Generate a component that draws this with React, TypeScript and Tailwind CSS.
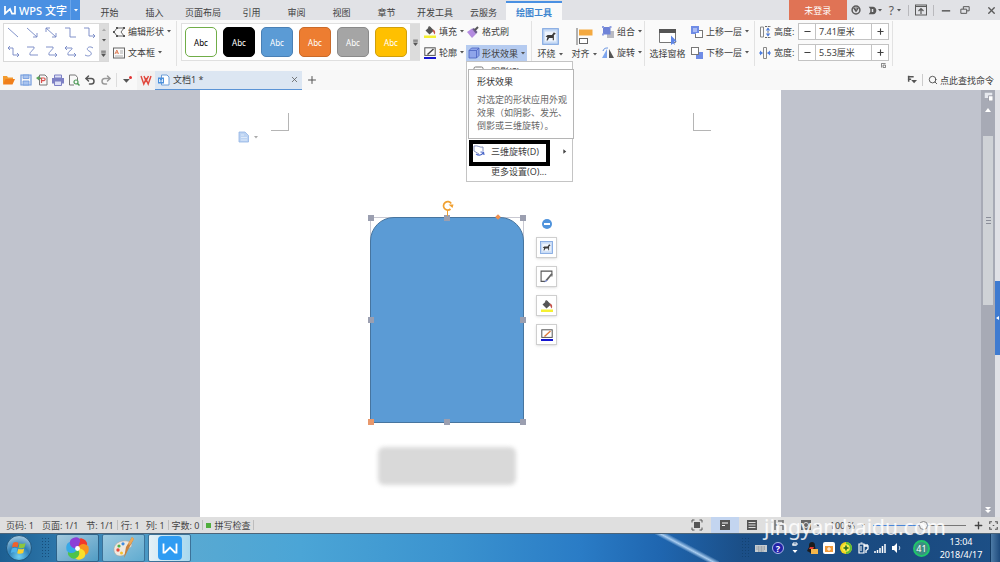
import { useState, type ReactNode } from "react";
import { Minus, Plus, Redo2, Search, Undo2, X } from "lucide-react";

const TABS = ["开始", "插入", "页面布局", "引用", "审阅", "视图", "章节", "开发工具", "云服务"];

const LINES = [
    "M1 1 L11 10",
    "M1 1 L11 10 M11 6 V10 H7",
    "M1 1 L11 10 M11 6 V10 H7 M1 5 V1 H5",
    "M1 1 H6 V10 H12",
    "M1 1 H6 V9 H12 M10 7 L12 9 L10 11",
    "M3 0 L1 2 L3 4 M1 2 H6 V9 H12 M10 7 L12 9 L10 11",
    "M1 1 H8 C9 4 3 5 4 9 H12",
    "M1 1 H8 C9 4 3 5 4 9 H12 M10 7 L12 9 L10 11",
    "M3 0 L1 2 L3 4 M1 2 H8 C9 4 3 5 4 9 H12 M10 7 L12 9 L10 11",
    "M10 2 C6 -1 2 3 6 5 C11 7 7 12 2 9",
];

const STYLES = [
    "border-[#70ad47] bg-white text-black",
    "border-black bg-black text-white",
    "border-[#4a80b5] bg-[#5b9bd5] text-white",
    "border-[#c96a2a] bg-[#ed7d31] text-white",
    "border-[#8a8a8a] bg-[#a5a5a5] text-white",
    "border-[#cf9f0c] bg-[#ffc000] text-white",
];

const HANDLES = [
    "left-[-3px] top-[-3px] bg-[#9b9fb0]",
    "left-[73px] top-[-3px] bg-[#9b9fb0]",
    "right-[-3px] top-[-3px] bg-[#9b9fb0]",
    "left-[-3px] top-[99px] bg-[#9b9fb0]",
    "right-[-3px] top-[99px] bg-[#9b9fb0]",
    "left-[-3px] bottom-[-3px] bg-[#e8986c]",
    "left-[73px] bottom-[-3px] bg-[#9b9fb0]",
    "right-[-3px] bottom-[-3px] bg-[#9b9fb0]",
];

function Icon({ children, className = "size-3" }: { children: ReactNode; className?: string }) {
    return (
        <svg viewBox="0 0 12 12" fill="none" className={`shrink-0 ${className}`} aria-hidden="true">
            {children}
        </svg>
    );
}

function Caret({ className = "text-[#555]" }: { className?: string }) {
    return (
        <svg viewBox="0 0 4 3" className={`h-[3px] w-1 shrink-0 ${className}`} aria-hidden="true">
            <path d="M0 0 H4 L2 2.6 Z" fill="currentColor" />
        </svg>
    );
}

function BucketIcon({ bar = "#f5f032" }: { bar?: string }) {
    return (
        <Icon>
            <path d="M1.5 4.5 L6 .5 L10 4.5 L5.5 8.5 Z" fill="#555" />
            <path d="M4.5 2 C4 0 6 0 6.5 2" stroke="#555" strokeWidth=".8" />
            <path d="M9 3.5 C11.4 4.200 11.6 6.500 10.8 8.5 C9.4 7.500 9.6 5.5 8.5 5 Z" fill="#c4524a" />
            <rect x="0" y="9.5" width="12" height="2.5" fill={bar} />
        </Icon>
    );
}

function PenIcon({ pen = "#444" }: { pen?: string }) {
    return (
        <Icon>
            <rect x=".8" y=".8" width="10.4" height="7.6" stroke="#555" />
            <path d="M3.5 7.5 L9.5 2" stroke={pen} strokeWidth="1.4" />
            <rect y="10" width="12" height="2" fill="#1515d0" />
        </Icon>
    );
}

function WrapIcon({ className = "size-3" }: { className?: string }) {
    return (
        <Icon className={className}>
            <rect x=".5" y=".5" width="11" height="11" fill="#c9dcf6" stroke="#7fa6e0" strokeWidth=".8" />
            <rect x="2" y="2.5" width="8" height="7" fill="#eef4fd" />
            <path d="M2.5 6 L4 5 H7 L8.4 3 L9.8 4 L8.4 5 V8.6 H7.6 V7 H5 L4 8.8 H3.2 L3.8 6.6 Z" fill="#3c3c3c" />
        </Icon>
    );
}

function ToolButton({ icon, label, caret = true }: { icon: ReactNode; label: string; caret?: boolean }) {
    return (
        <button className="flex h-[21px] items-center gap-[3px] whitespace-nowrap">
            {icon}
            <span>{label}</span>
            {caret && <Caret />}
        </button>
    );
}

function BigButton({ icon, label, caret, className }: { icon: ReactNode; label: string; caret?: boolean; className: string }) {
    return (
        <button className={`flex flex-col items-center pt-[7px] ${className}`}>
            {icon}
            <span className="mt-[3px] flex items-center gap-[3px] whitespace-nowrap leading-3">
                {label}
                {caret && <Caret />}
            </span>
        </button>
    );
}

function SizeField({ id, label, icon, initial }: { id: string; label: string; icon: ReactNode; initial: string }) {
    const [value, setValue] = useState(initial);
    return (
        <div className="flex h-[21px] items-center">
            {icon}
            <label htmlFor={id} className="ml-[3px] w-6 whitespace-nowrap">
                {label}
            </label>
            <div className="flex h-[17px] w-[91px] items-stretch border border-[#c3c3c3] bg-white">
                <button aria-label={`减小${label}`} className="flex w-[17px] items-center justify-center border-r border-[#c3c3c3]">
                    <Minus className="size-[9px]" strokeWidth={3} />
                </button>
                <input
                    id={id}
                    value={value}
                    onChange={(e) => setValue(e.target.value)}
                    className="w-0 flex-1 bg-transparent px-[3px] outline-none"
                />
                <button aria-label={`增大${label}`} className="flex w-[17px] items-center justify-center border-l border-[#c3c3c3]">
                    <Plus className="size-[9px]" strokeWidth={3} />
                </button>
            </div>
        </div>
    );
}

function TitleBar() {
    return (
        <header className="flex h-5 items-stretch bg-[#e1e2e6]">
            <button className="flex w-20 shrink-0 items-center bg-[#4a90e2] pl-1 text-[11px] font-medium text-white">
                <svg viewBox="0 0 12 10" fill="none" className="mr-[3px] h-[10px] w-3" aria-hidden="true">
                    <path d="M1 1 V8.6 L6 4 L8 8.6 H11 V1" stroke="white" strokeWidth="1.7" />
                </svg>
                <span className="flex-1 whitespace-nowrap text-left">WPS 文字</span>
                <span className="flex h-full w-[10px] items-center justify-center border-l border-[#6aa5ea]">
                    <Caret className="text-white" />
                </span>
            </button>
            <nav className="ml-[7px] flex items-stretch pt-px">
                {TABS.map((tab) => (
                    <button key={tab} className="min-w-[45px] whitespace-nowrap px-2 pt-[3px]">
                        {tab}
                    </button>
                ))}
                <button className="w-14 border-t-2 border-[#4a90e2] bg-[#fafafa] pt-px font-bold text-[#3f86cf]">
                    绘图工具
                </button>
            </nav>
            <div className="ml-auto flex items-center text-[#5a5a5a]">
                <button className="h-5 w-[58px] bg-[#e07355] text-white">未登录</button>
                <Icon className="ml-1 size-[10px]">
                    <circle cx="6" cy="6" r="4.7" stroke="currentColor" strokeWidth="1.8" />
                    <path d="M2 3 H10 L6 9 Z" fill="currentColor" />
                    <path d="M5 3.5 L7 5" stroke="#e1e2e6" />
                </Icon>
                <button aria-label="换肤" className="ml-[7px] flex items-center gap-px">
                    <Icon className="size-[9px]">
                        <path d="M1 1 H7 C13 2 12 11 7 11 H1 L3 8 V4 Z" fill="currentColor" />
                        <path d="M5 4 H7 V8 H5 Z" fill="#e1e2e6" />
                    </Icon>
                    <Caret />
                </button>
                <button className="ml-[7px] flex items-center gap-[3px] text-[12px]">
                    ?<Caret />
                </button>
                <span className="ml-[7px] h-[11px] w-px bg-[#b9b9bd]" />
                <Icon className="ml-[6px] size-3">
                    <rect x=".5" y="1" width="11" height="10" stroke="currentColor" />
                    <path d="M.5 2.5 H11.5 M6 10 V5 M3.5 7 L6 4.5 L8.5 7" stroke="currentColor" strokeWidth="1.2" />
                </Icon>
                <span className="ml-[6px] h-[11px] w-px bg-[#b9b9bd]" />
                <button aria-label="最小化" className="ml-[7px]">
                    <Icon className="size-[10px]">
                        <path d="M1 7 H11" stroke="currentColor" strokeWidth="1.8" />
                    </Icon>
                </button>
                <button aria-label="还原" className="ml-[9px]">
                    <Icon className="size-[10px]">
                        <path d="M1 5 H8 V10 H1 Z M4 5 V2 H11 V7 H8" stroke="currentColor" strokeWidth="1.2" />
                    </Icon>
                </button>
                <button aria-label="关闭" className="ml-[16px] mr-[3px]">
                    <X className="size-[11px]" strokeWidth={3} />
                </button>
            </div>
        </header>
    );
}

function EffectsMenu() {
    return (
        <div className="absolute left-0 top-[19px] z-20 w-[107px] border border-[#c4c4c4] bg-white">
            <ul>
                <li className="h-[79px]">
                    <button className="flex h-[19px] w-full items-center gap-[6px] pl-[6px] text-left">
                        <Icon>
                            <rect x="1" y="1" width="9" height="9" rx="1.5" stroke="#777" />
                        </Icon>
                        <span>阴影(S)</span>
                    </button>
                </li>
                <li>
                    <button className="flex h-5 w-full items-center gap-[6px] pl-[6px] text-left">
                        <Icon>
                            <path d="M1 1 V6 L6 9 M1 1 C5 0 7 3 10 2 V6" stroke="#7c88b8" strokeWidth=".9" />
                            <path d="M3 9 C6 11 9 10 10 8 M7.5 7 L10.5 7.2 L11 10" stroke="#4a66c8" strokeWidth="1.2" />
                        </Icon>
                        <span className="whitespace-nowrap">三维旋转(D)</span>
                        <Icon className="ml-auto mr-1 size-[7px]">
                            <path d="M4 2 L9 6 L4 10 Z" fill="#444" />
                        </Icon>
                    </button>
                </li>
                <li>
                    <button className="flex h-5 w-full items-center whitespace-nowrap pl-6 text-left">更多设置(O)...</button>
                </li>
            </ul>
            {/* Marker round the rotation entry */}
            <div className="absolute left-[2px] top-[78px] h-[26px] w-[81px] border-4 border-black" />
            <div role="tooltip" className="absolute left-px top-[7px] h-[70px] w-[106px] border border-[#b5b5b5] bg-white px-2 pt-[5px]">
                <p className="leading-[13px] text-[#333]">形状效果</p>
                <p className="mt-[5px] whitespace-nowrap leading-[13px] text-[#666]">
                    对选定的形状应用外观
                    <br />
                    效果（如阴影、发光、
                    <br />
                    倒影或三维旋转）。
                </p>
            </div>
        </div>
    );
}

function Ribbon() {
    return (
        <section className="flex h-[50px] items-start bg-[#fafafa] pl-[3px]">
            {/* Line gallery */}
            <div className="mt-[3px] flex h-[39px] w-[106px] border border-[#d9d9d9] bg-white">
                <div className="grid flex-1 grid-cols-5 items-center justify-items-center">
                    {LINES.map((d) => (
                        <button key={d} aria-label="线条">
                            <svg viewBox="0 0 13 12" fill="none" className="h-3 w-[13px]" aria-hidden="true">
                                <path d={d} stroke="#7487c4" strokeWidth=".9" />
                            </svg>
                        </button>
                    ))}
                </div>
                <div className="flex w-[9px] flex-col items-center justify-around bg-[#dcdcdc]">
                    <Caret className="rotate-180 text-[#aaa]" />
                    <Caret />
                    <Icon className="size-[7px]">
                        <path d="M2 2 H10 M2 5 H10" stroke="#555" strokeWidth="1.5" />
                        <path d="M2 7 H10 L6 12 Z" fill="#555" />
                    </Icon>
                </div>
            </div>
            <div className="ml-1 mt-px h-[45px] w-[64px] border-r border-[#e2e2e2]">
                <ToolButton
                    label="编辑形状"
                    icon={
                        <Icon>
                            <path d="M4 2 H11 L8 6 L11 10 H4 L1 6 Z" stroke="#666" />
                            <path d="M3 1 H5 V3 H3 Z M10 1 H12 V3 H10 Z M3 9 H5 V11 H3 Z M10 9 H12 V11 H10 Z M0 5 H2 V7 H0 Z" fill="#555" />
                        </Icon>
                    }
                />
                <ToolButton
                    label="文本框"
                    icon={
                        <Icon>
                            <rect x=".5" y="1" width="11" height="10" stroke="#666" />
                            <path d="M2 7 L3.8 3 L5.5 7 M2.6 5.8 H5" stroke="#e0805a" />
                            <path d="M7 4 H10 M7 6 H10 M2 9 H10" stroke="#999" strokeWidth=".8" />
                        </Icon>
                    }
                />
            </div>
            {/* Shape style gallery */}
            <div className="ml-1 mt-[3px] flex h-[38px] w-[239px] items-center border-y border-l border-[#e0e0e0] bg-white pl-[3px]">
                <div className="flex flex-1 gap-[6px]">
                    {STYLES.map((style) => (
                        <button key={style} className={`h-[30px] w-8 rounded-[5px] border text-[8px] ${style}`}>
                            Abc
                        </button>
                    ))}
                </div>
                <button aria-label="更多样式" className="flex h-full w-[10px] items-center justify-center bg-[#dcdcdc]">
                    <Icon className="size-[7px]">
                        <path d="M2 2 H10 M2 5 H10" stroke="#555" strokeWidth="1.5" />
                        <path d="M2 7 H10 L6 12 Z" fill="#555" />
                    </Icon>
                </button>
            </div>
            <div className="ml-1 mt-px w-[42px]">
                <ToolButton label="填充" icon={<BucketIcon />} />
                <ToolButton label="轮廓" icon={<PenIcon />} />
            </div>
            <div className="relative mt-px w-[61px]">
                <div className="pl-px">
                    <ToolButton
                        label="格式刷"
                        caret={false}
                        icon={
                            <Icon>
                                <path d="M0 6 L5 2.500 L9 8 L5 12 Z" fill="#b48be0" />
                                <path d="M5 3 L7 2 L10.500 6 L9 8 Z" fill="#6b5a8c" />
                                <path d="M8 4 L11 1" stroke="#555" strokeWidth="2" />
                            </Icon>
                        }
                    />
                </div>
                <div className="relative mt-[3px]">
                    <button className="flex h-4 w-[61px] items-center gap-[2px] whitespace-nowrap bg-[#b5cbf0] pl-[2px]">
                        <Icon>
                            <path d="M1 3.5 L3.5 1 H11 V8.5 L8.5 11 H1 Z" fill="#8fa5ea" stroke="#4a62c0" strokeWidth=".8" />
                            <path d="M1 3.5 H8.5 V11 M8.5 3.5 L11 1" stroke="#4a62c0" strokeWidth=".8" />
                        </Icon>
                        <span>形状效果</span>
                        <span className="ml-px">
                            <Caret />
                        </span>
                    </button>
                    <div className="absolute left-0 top-[-3px]">
                        <EffectsMenu />
                    </div>
                </div>
            </div>
            <div className="ml-1 mt-px flex h-[45px] border-l border-[#e2e2e2]">
                <BigButton label="环绕" caret className="w-9" icon={<WrapIcon className="size-[17px]" />} />
                <BigButton
                    label="对齐"
                    caret
                    className="w-8"
                    icon={
                        <svg viewBox="0 0 17 17" fill="none" className="size-[17px]" aria-hidden="true">
                            <path d="M1 0 V17" stroke="#666" />
                            <rect x="3" y="1.5" width="13.5" height="6" fill="#f4a940" />
                            <rect x="3.5" y="10.5" width="8" height="5" fill="white" stroke="#666" />
                        </svg>
                    }
                />
            </div>
            <div className="ml-[2px] mt-px h-[45px] w-[43px] border-r border-[#e2e2e2]">
                <ToolButton
                    label="组合"
                    icon={
                        <Icon>
                            <rect x="5" y="5" width="7" height="7" fill="#b9bac2" />
                            <rect x="1" y="1" width="7.500" height="7.500" fill="#6f83d8" />
                            <path d="M0 0 H2 V2 H0 Z M7.500 0 H9.500 V2 H7.500 Z M0 7.500 H2 V9.500 H0 Z" fill="#8f9fe0" />
                        </Icon>
                    }
                />
                <ToolButton
                    label="旋转"
                    icon={
                        <Icon>
                            <path d="M5 2 V11 H0 Z" fill="#7fa6ee" />
                            <path d="M7 2 V11 H12 Z" fill="#555" />
                            <path d="M1 4 C2 1 4 1 6 1" stroke="#5a8adf" />
                        </Icon>
                    }
                />
            </div>
            <BigButton
                label="选择窗格"
                className="mt-px w-[45px]"
                icon={
                    <svg viewBox="0 0 18 17" fill="none" className="h-[17px] w-[18px]" aria-hidden="true">
                        <path d="M.5 2.500 H16.500 V14.500 H.5 Z" fill="white" stroke="#777" />
                        <rect y="1" width="17" height="4" fill="#555" />
                        <path d="M12 7.500 L18 13.500 H15 L16 17 L14 15.500 L12 17 Z" fill="#5f86e6" />
                    </svg>
                }
            />
            <div className="ml-px mt-px h-[45px] w-[64px] border-r border-[#e2e2e2]">
                <ToolButton
                    label="上移一层"
                    icon={
                        <Icon>
                            <rect x="4.500" y="4.500" width="7" height="7" fill="white" stroke="#777" />
                            <path d="M0 0 H8 V7 H5 V8 H0 Z" fill="#6f8ce6" />
                            <path d="M2 2 H6 V6 H2 Z" fill="#a9bbf3" />
                        </Icon>
                    }
                />
                <ToolButton
                    label="下移一层"
                    icon={
                        <Icon>
                            <rect x="5" y="5" width="7" height="7" fill="#6f8ce6" />
                            <rect x=".5" y=".5" width="7" height="7" fill="white" stroke="#777" />
                        </Icon>
                    }
                />
            </div>
            <div className="relative ml-1 mt-px h-[45px] w-[134px] border-r border-[#e2e2e2]">
                <SizeField
                    id="shape-height"
                    label="高度:"
                    initial="7.41厘米"
                    icon={
                        <Icon>
                            <path d="M1.500 1 H4.500 V11 H1.500 Z" stroke="#888" />
                            <path d="M6 .5 H12 M6 11.500 H12 M9 2 V10" stroke="#666" strokeDasharray="2 .8" />
                            <path d="M6.800 4.500 L9 1.500 L11.200 4.500 Z M6.800 7.500 L9 10.500 L11.200 7.500 Z" fill="#4f7fe0" />
                        </Icon>
                    }
                />
                <SizeField
                    id="shape-width"
                    label="宽度:"
                    initial="5.53厘米"
                    icon={
                        <Icon>
                            <path d="M4.500 .5 H7.500 V11.500 H4.500 Z" stroke="#888" />
                            <path d="M0 6 H3.500 M8.500 6 H12" stroke="#4f7fe0" />
                            <path d="M1 3.500 L3.800 6 L1 8.500 Z M11 3.500 L8.200 6 L11 8.500 Z" fill="#4f7fe0" />
                        </Icon>
                    }
                />
                <button aria-label="大小设置" className="absolute bottom-[-2px] right-[6px]">
                    <Icon className="size-[5px]">
                        <path d="M1 11 V1 H11 M5 5 H11 V11 H5 Z" stroke="#666" strokeWidth="2" />
                    </Icon>
                </button>
            </div>
        </section>
    );
}

function DocumentBar() {
    return (
        <section className="flex h-5 items-center bg-[#f8f8f8]">
            <div className="flex items-center gap-1 pl-[3px]">
                <button aria-label="打开">
                    <Icon>
                        <path d="M0 10 V2 H4 L5 3.500 H10 V5" fill="#f39a2d" />
                        <path d="M0 10.500 L2.500 5 H12 L9.500 10.500 Z" fill="#f07f1c" />
                    </Icon>
                </button>
                <button aria-label="保存" className="ml-px">
                    <Icon>
                        <path d="M1 1 H11 V11 H1 Z" stroke="#6d97dc" strokeWidth="1.200" />
                        <path d="M3 1 H9 V4.500 H3 Z M3 7 H9 V11 H3 Z" fill="#a9c4ef" stroke="#6d97dc" strokeWidth=".8" />
                    </Icon>
                </button>
                <button aria-label="输出为PDF">
                    <Icon>
                        <path d="M3.500 1 H9 L11 3 V11 H3.500 Z" stroke="#777" />
                        <path d="M5.500 9 V4 H8 C9.500 4.200 9.500 6.500 8 6.700 H5.500" stroke="#d9534f" strokeWidth="1.200" />
                        <path d="M0 4 L3 2 V3.500 H5 V5 H3 V6.500 Z" fill="#5ba35a" />
                    </Icon>
                </button>
                <button aria-label="打印">
                    <Icon>
                        <path d="M0 4 H12 V9.500 H0 Z" fill="#7d80c4" />
                        <path d="M2.500 1 H9.500 V4 H2.500 Z M2.500 7 H9.500 V11.500 H2.500 Z" fill="#dcdff5" stroke="#7d80c4" />
                    </Icon>
                </button>
                <button aria-label="打印预览">
                    <Icon>
                        <path d="M9.500 6 V3.500 L7.500 1 H1.500 V11 H6" stroke="#777" />
                        <circle cx="8" cy="8" r="2" stroke="#4f9a57" strokeWidth="1.200" />
                        <path d="M9.500 9.500 L11.500 11.500" stroke="#4f9a57" strokeWidth="1.400" />
                    </Icon>
                </button>
                <button aria-label="撤销">
                    <Undo2 className="size-3 text-[#555]" strokeWidth={3} />
                </button>
                <button aria-label="恢复">
                    <Redo2 className="size-3 text-[#999]" strokeWidth={3} />
                </button>
            </div>
            <span className="ml-1 h-[14px] w-px bg-[#ddd]" />
            <button aria-label="自定义快速访问" className="ml-[6px]">
                <Icon className="size-[9px]">
                    <path d="M0 4 H9 L4.500 9 Z" fill="#555" />
                    <circle cx="10" cy="2" r="2" fill="#e03030" />
                </Icon>
            </button>
            <div className="ml-[5px] flex h-[19px] w-[18px] items-center justify-center bg-[#f1f1f1]">
                <Icon>
                    <path d="M1 2 L3.800 10 L6 5 L8.200 10 L11 2 M4 2 L6 7 L8.500 2" stroke="#e0473c" strokeWidth="1.400" />
                </Icon>
            </div>
            <div className="flex h-[19px] w-[147px] items-center gap-[3px] border-b border-[#5b94d6] bg-[#dce6f2] px-[3px]">
                <Icon>
                    <path d="M3.500 1 H9 L11 3 V11 H3.500 Z" fill="white" stroke="#6e9fd8" />
                    <rect y="3.500" width="6" height="6" fill="#4a90dc" />
                    <path d="M1.500 5 V8 L3 6.500 L4.500 8 V5" stroke="white" strokeWidth=".8" />
                </Icon>
                <span className="flex-1">文档1 *</span>
                <button aria-label="关闭文档">
                    <X className="size-[9px] text-[#555]" />
                </button>
            </div>
            <button aria-label="新建标签" className="ml-1">
                <Plus className="size-3 text-[#555]" />
            </button>
            <div className="ml-auto flex items-center pr-[6px]">
                <Icon className="size-[10px]">
                    <path d="M1 2 H8 M1 5 H5 M2 1 V8" stroke="#555" strokeWidth="1.800" />
                    <path d="M5 6 H12 L8.500 10 Z" fill="#555" />
                </Icon>
                <span className="mx-[5px] h-3 w-px bg-[#ccc]" />
                <button className="flex items-center gap-[2px]">
                    <Search className="size-[10px]" />
                    点此查找命令
                </button>
            </div>
        </section>
    );
}

function FloatButton({ label, children }: { label: string; children: ReactNode }) {
    return (
        <button
            aria-label={label}
            className="flex size-[21px] items-center justify-center border border-[#cfcfcf] bg-white shadow-sm"
        >
            {children}
        </button>
    );
}

function Workspace() {
    return (
        <main className="flex min-h-[427px] flex-1 bg-[#e0e1e6]">
            <div className="flex flex-1 justify-center overflow-hidden bg-[#c0c3cd]">
                {/* Sheet: a free canvas, so its objects keep their own coordinates */}
                <div className="relative w-[581px] shrink-0 bg-white">
                    <div className="absolute left-[71px] top-[23px] size-[18px] border-b border-r border-[#b5b5b5]" />
                    <div className="absolute left-[493px] top-[23px] size-[18px] border-b border-l border-[#b5b5b5]" />
                    <button aria-label="粘贴选项" className="absolute left-[38px] top-[41px] flex items-center gap-1">
                        <Icon>
                            <path d="M1 1 H7 L10.500 4.500 V11 H1 Z" fill="#bcd3f2" stroke="#93b4e4" strokeWidth=".8" />
                            <path d="M3 4 H6 M3 6.500 H9 M3 9 H9" stroke="#dce9fa" />
                        </Icon>
                        <Caret className="text-[#aaa]" />
                    </button>

                    <div className="absolute left-[170px] top-[127px] h-[206px] w-[154px] border border-[#c9c9d2]">
                        <div className="absolute inset-[-1px] rounded-t-[24px] border border-[#47759f] bg-[#5b9bd5]" />
                        {HANDLES.map((place) => (
                            <span key={place} className={`absolute size-[6px] ${place}`} />
                        ))}
                        <span className="absolute left-[125px] top-[-3px] size-1 rotate-45 bg-[#f09050]" />
                        <svg viewBox="0 0 14 18" fill="none" className="absolute left-[70px] top-[-19px] h-[18px] w-[14px]" aria-hidden="true">
                            <path d="M9.500 10 A4.200 4.200 0 1 1 10.200 4.500" stroke="#f0a030" strokeWidth="1.700" />
                            <path d="M7.500 5.500 H12.500 L11.500 9 Z" fill="#f0a030" />
                            <path d="M6.500 11 V17" stroke="#f0a030" />
                        </svg>
                    </div>
                    <div className="absolute left-[178px] top-[357px] h-[38px] w-[138px] rounded-[6px] bg-[#d9d9d9] blur-[2px]" />

                    <div className="absolute left-[336px] top-[129px] flex flex-col items-center gap-2">
                        <button aria-label="收起" className="flex size-[10px] items-center justify-center rounded-full bg-[#4f93dc]">
                            <span className="h-[2px] w-[6px] bg-white" />
                        </button>
                        <FloatButton label="环绕方式">
                            <WrapIcon className="size-[13px]" />
                        </FloatButton>
                        <FloatButton label="形状样式">
                            <Icon className="size-[13px]">
                                <path d="M11 6 V1 H1 V10.500 H5" stroke="#555" />
                                <path d="M5.500 10 L11 3.500" stroke="#666" strokeWidth="1.600" />
                                <path d="M3.500 11.500 L6 9 L7 10 Z" fill="#6f83d8" />
                            </Icon>
                        </FloatButton>
                        <FloatButton label="形状填充">
                            <BucketIcon />
                        </FloatButton>
                        <FloatButton label="形状轮廓">
                            <PenIcon pen="#e07c3c" />
                        </FloatButton>
                    </div>
                </div>
            </div>
            {/* Scroll bar */}
            <div className="flex w-[14px] flex-col items-center bg-[#a7aab5]">
                <Icon className="mt-[2px] size-[9px]">
                    <path d="M1 1 H11 V8 H1 Z" fill="#e6e8ee" />
                    <path d="M6 5 H12 V12 H6 Z" fill="white" stroke="#8b8e99" />
                </Icon>
                <svg viewBox="0 0 6 4" className="mt-[7px] h-1 w-[6px]" aria-hidden="true">
                    <path d="M0 4 L3 0 L6 4 Z" fill="white" />
                </svg>
                <div className="mt-6 flex h-[169px] w-[10px] flex-col items-center justify-center gap-[2px] bg-[#cfd2d6]">
                    <span className="h-px w-[5px] bg-[#8b8e99]" />
                    <span className="h-px w-[5px] bg-[#8b8e99]" />
                    <span className="h-px w-[5px] bg-[#8b8e99]" />
                </div>
                <svg viewBox="0 0 6 6" className="mb-1 mt-auto size-[6px]" aria-hidden="true">
                    <path d="M0 0 H6 L3 3 Z M0 3 H6 L3 6 Z" fill="white" />
                </svg>
            </div>
            <div className="flex w-[5px] flex-col pt-[191px]">
                <button aria-label="展开任务窗格" className="flex h-[74px] items-center justify-center bg-[#3f7bd0]">
                    <svg viewBox="0 0 3 4" className="h-1 w-[3px]" aria-hidden="true">
                        <path d="M3 0 V4 L0 2 Z" fill="white" />
                    </svg>
                </button>
            </div>
        </main>
    );
}

function Divider() {
    return <span className="mx-[3px] h-[10px] w-px bg-[#bdbdbd]" />;
}

function StatusBar() {
    const [zoom, setZoom] = useState(55);
    return (
        <footer className="relative flex h-4 items-center whitespace-nowrap bg-[#dfdfdf] pl-[6px] text-[#444]">
            <span>页码: 1</span>
            <span className="ml-2">页面: 1/1</span>
            <span className="ml-2">节: 1/1</span>
            <Divider />
            <span>行: 1</span>
            <span className="ml-[6px]">列: 1</span>
            <Divider />
            <span>字数: 0</span>
            <Divider />
            <span className="mr-[3px] size-[5px] bg-[#4fae3c]" />
            <span>拼写检查</span>
            <Divider />
            <div className="ml-auto flex items-center pr-[2px]">
                <button aria-label="全屏">
                    <Icon>
                        <rect x="3" y="3" width="6" height="6" fill="#555" />
                        <path d="M1 3.500 V1 H3.500 M8.500 1 H11 V3.500 M11 8.500 V11 H8.500 M3.500 11 H1 V8.500" stroke="#555" />
                    </Icon>
                </button>
                <button aria-label="页面视图" className="ml-2 flex h-4 w-7 items-center justify-center bg-[#c3d5f0]">
                    <Icon>
                        <rect x="1" y="1" width="10" height="10" fill="#555" />
                        <path d="M3 4 H9 M3 6.500 H6" stroke="white" />
                    </Icon>
                </button>
                <button aria-label="大纲视图" className="ml-[7px]">
                    <Icon>
                        <rect x="1" y="1" width="10" height="10" fill="#555" />
                        <path d="M2.500 3.500 H9.500 M2.500 6 H9.500 M2.500 8.500 H9.500" stroke="#ddd" />
                    </Icon>
                </button>
                <button aria-label="阅读版式" className="ml-[15px]">
                    <Icon>
                        <path d="M2 1 V11 M2 6 H10 M10 1 V11 M5 2 H10" stroke="#777" strokeWidth="1.600" />
                    </Icon>
                </button>
                <button aria-label="网页视图" className="ml-[15px] flex items-center gap-1">
                    <Icon>
                        <rect x="1" y="1" width="10" height="10" fill="#666" />
                        <circle cx="6" cy="6" r="2.500" stroke="#ddd" />
                    </Icon>
                    <Caret />
                </button>
                <button className="ml-[10px] flex items-center gap-[6px]">
                    100 %
                    <Caret />
                </button>
                <input
                    type="range"
                    aria-label="显示比例"
                    value={zoom}
                    onChange={(e) => setZoom(Number(e.target.value))}
                    className="ml-2 h-px w-[93px] appearance-none bg-linear-to-r from-[#4a86d8] from-50% to-[#777] to-50% [&::-webkit-slider-thumb]:size-[9px] [&::-webkit-slider-thumb]:appearance-none [&::-webkit-slider-thumb]:rounded-full [&::-webkit-slider-thumb]:border [&::-webkit-slider-thumb]:border-[#888] [&::-webkit-slider-thumb]:bg-[#f2f2f2]"
                />
                <button aria-label="放大" className="ml-[7px]">
                    <Plus className="size-[11px]" strokeWidth={3} />
                </button>
                <Icon className="ml-[5px] size-[9px]">
                    <path d="M1 4 V1 H4 M8 1 H11 V4 M11 8 V11 H8 M4 11 H1 V8 M5 6 H7" stroke="#555" strokeWidth="1.500" />
                </Icon>
            </div>
            <span className="pointer-events-none absolute right-[54px] top-[-4px] z-10 text-[21px] leading-7 text-white/85">
                jingyan.baidu.com
            </span>
        </footer>
    );
}

function Grip() {
    return (
        <span className="h-[22px] w-2 bg-[radial-gradient(#0f3d68_35%,transparent_40%)] bg-size-[3px_3px] opacity-70" />
    );
}

function Taskbar() {
    return (
        <footer className="border-t border-[#4d6478] bg-[linear-gradient(90deg,#1d5f92_0%,#2d77ab_6%,#58a9d2_19%,#4ba5d6_30%,#3b93cf_45%,#2a7cc6_58%,#1f66b0_66%,#1b4f88_74%,#1a4a80_90%,#1c4f86_100%)]">
            {/* Light streak of the glass theme */}
            <div className="flex h-7 items-center bg-[linear-gradient(28deg,transparent_44%,#a9cdf0_50%,transparent_57%)] bg-size-[64px_28px] bg-position-[70%_0] bg-no-repeat">
                <button aria-label="开始菜单" className="ml-[6px]">
                    <svg viewBox="0 0 26 26" className="size-[26px]" aria-hidden="true">
                        <defs>
                            <radialGradient id="orb" cx=".5" cy=".85" r=".85">
                                <stop offset="0" stopColor="#6fd0f2" />
                                <stop offset=".5" stopColor="#2d7fb8" />
                                <stop offset="1" stopColor="#a9cbe0" />
                            </radialGradient>
                        </defs>
                        <circle cx="13" cy="13" r="12.500" fill="url(#orb)" stroke="#174a70" strokeWidth=".8" />
                        <path d="M7 8 C9 6.500 11 7 12.500 8 L11.500 12.500 C10 11.500 8 11.500 6 12.500 Z" fill="#f0602c" />
                        <path d="M13.500 8.200 C15.500 9.200 17.500 9 19.500 8 L18.500 12.500 C16.500 13.500 14.500 13.500 12.500 12.700 Z" fill="#8cc63f" />
                        <path d="M5.800 13.500 C8 12.500 10 12.600 11.300 13.500 L10.300 18 C8.500 17 6.500 17 4.800 18 Z" fill="#4fb3ea" />
                        <path d="M12.300 13.800 C14.300 14.700 16.300 14.500 18.200 13.500 L17.200 18 C15.200 19 13 19 11.200 18.200 Z" fill="#fbd02c" />
                    </svg>
                </button>
                <span className="ml-[9px] flex">
                    <Grip />
                </span>
                <div className="ml-[7px] flex gap-[3px]">
                    <button aria-label="浏览器" className="flex h-7 w-[43px] items-center justify-center rounded-[2px] border border-[#2e6288] bg-linear-to-br from-[#a3c9de] to-[#4f9cc4]">
                        <svg viewBox="0 0 24 24" className="size-[23px]" aria-hidden="true">
                            {["#f0392c", "#f7931e", "#f9e02c", "#4fc34a", "#36a9e8", "#8c3fd6"].map((color, i) => (
                                <path key={color} d="M12 12 C7 9 7 3 12 .5 C18 0 22 4 19 8 Z" fill={color} transform={`rotate(${i * 60 + 20} 12 12)`} />
                            ))}
                            <circle cx="12" cy="12" r="2.500" fill="white" />
                        </svg>
                    </button>
                    <button aria-label="画图" className="flex h-7 w-[43px] items-center justify-center rounded-[2px] border border-[#3c7298] bg-linear-to-br from-[#9dcae0] to-[#5fabd0]">
                        <svg viewBox="0 0 24 24" className="size-6" aria-hidden="true">
                            <path d="M2 15 C1 8 8 4 15 5 C21 6 21 11 17 12 C13 13 16 17 12 19 C8 21 3 20 2 15 Z" fill="#efe9e0" stroke="#a8a49c" strokeWidth=".6" />
                            <circle cx="6" cy="14" r="1.700" fill="#e9493a" />
                            <circle cx="7" cy="10" r="1.600" fill="#4fb04a" />
                            <circle cx="11" cy="7.800" r="1.600" fill="#3e8ce0" />
                            <circle cx="9.500" cy="17" r="1.500" fill="#f5c12c" />
                            <path d="M20 1 L22 3 L17 12 L12 22 L14 11 Z" fill="#c9813d" />
                            <path d="M20 1 L22 3 L18 9 L16 8 Z" fill="#eaa95b" />
                        </svg>
                    </button>
                    <button aria-label="WPS 文字" className="flex h-7 w-[43px] items-center justify-center rounded-[2px] border border-[#3c7298] bg-linear-to-r from-[#e4f1f7] to-[#a8d8ee]">
                        <svg viewBox="0 0 24 24" fill="none" className="size-6" aria-hidden="true">
                            <rect width="24" height="24" rx="4" fill="#2f9cf2" />
                            <path d="M5.500 7.500 V16.500 H7 L12 11.500 L17 16.500 H18.500 V7.500" stroke="white" strokeWidth="1.800" />
                        </svg>
                    </button>
                </div>
                <div className="ml-auto flex items-center gap-[5px] text-white">
                    <Grip />
                    <Icon className="ml-px size-3">
                        <rect x="0" y="3" width="12" height="7" fill="#c5cbd0" />
                        <path d="M1.500 5 H10.500 M1.500 7 H10.500 M3 9 H9" stroke="#69737c" strokeWidth=".8" strokeDasharray="1 .5" />
                    </Icon>
                    <span className="flex size-3 items-center justify-center rounded-full border border-[#aab6e8] bg-[#2222a8] font-bold">
                        ?
                    </span>
                    <Icon>
                        <path d="M4 1 H8 V3 H4 Z M3 3 H7" stroke="white" />
                        <path d="M3.500 8 H8.500 L6 11 Z" fill="white" />
                    </Icon>
                    <Icon>
                        <path d="M6 0 C3 0 3 3 3 5 L1 9 L3 10 L6 12 L10 10 L9 4 C9 1 8 0 6 0 Z" fill="#1c1c1c" />
                        <path d="M4 5 H8 L7 7 H3 Z" fill="#e23c30" />
                        <path d="M5 7 H12 V12 H5 Z" fill="#f5b64a" />
                    </Icon>
                    <Icon>
                        <rect width="12" height="12" rx="2" fill="white" />
                        <path d="M2 4 H10 V10 H2 Z" fill="#f09a3c" />
                        <path d="M4 7 H8 M6 5 V9" stroke="white" />
                    </Icon>
                    <Icon>
                        <circle cx="6" cy="6" r="6" fill="#f3d51e" />
                        <path d="M6 0 A6 6 0 0 1 6 12 Z" fill="#5fbf3a" />
                        <circle cx="6" cy="6" r="3.800" fill="#f7ee4a" />
                        <path d="M6 3.500 V8.500 M3.500 6 H8.500" stroke="#2c6b1f" strokeWidth="1.600" />
                    </Icon>
                    <Icon>
                        <path d="M2 2 H7 V11 H2 Z" stroke="white" strokeWidth="1.200" />
                        <path d="M3.500 1 H5.500 M4 4 V9" stroke="white" />
                        <path d="M7 4 H11 V7 L9 8.500 V11 M8 2 V4 M10 2 V4" stroke="white" strokeWidth="1.300" />
                    </Icon>
                    <Icon>
                        <path d="M1 11 V9 M3.500 11 V8 M6 11 V6 M8.500 11 V4 M11 11 V2" stroke="white" strokeWidth="1.500" />
                    </Icon>
                    <Icon>
                        <path d="M1 4 H3 L6 1 V11 L3 8 H1 Z" fill="white" />
                        <path d="M8 4 C9 5 9 7 8 8" stroke="#c5d5e8" />
                    </Icon>
                    <span className="ml-[5px] flex size-[17px] items-center justify-center rounded-full border-2 border-[#20c56b] bg-[#3c8d83]">
                        41
                    </span>
                    <time className="ml-[3px] w-[46px] text-center leading-[13px]">
                        13:04
                        <br />
                        2018/4/17
                    </time>
                </div>
                <button aria-label="显示桌面" className="ml-[6px] h-7 w-[10px] border-l border-[#123a63] bg-linear-to-r from-[#4d7ba6] to-[#1d4a7c]" />
            </div>
        </footer>
    );
}

export default function App() {
    return (
        <div className="flex min-h-screen flex-col bg-white font-['Noto_Sans','Noto_Sans_CJK_SC',sans-serif] text-[9px] leading-[13px] text-[#404040]">
            <TitleBar />
            <Ribbon />
            <DocumentBar />
            <Workspace />
            <StatusBar />
            <Taskbar />
        </div>
    );
}
